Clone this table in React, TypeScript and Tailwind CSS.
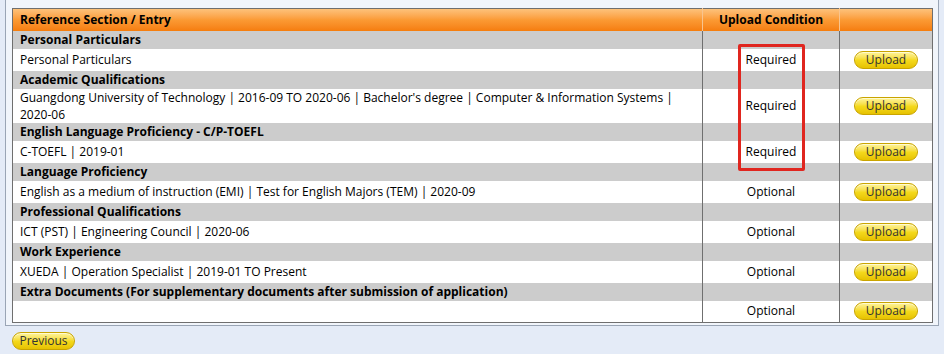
type Entry = { text: string; cond: string; tall?: boolean };
type Section = { title: string; entries: Entry[] };

const sections: Section[] = [
  { title: "Personal Particulars", entries: [{ text: "Personal Particulars", cond: "Required" }] },
  {
    title: "Academic Qualifications",
    entries: [
      {
        text: "Guangdong University of Technology | 2016-09 TO 2020-06 | Bachelor's degree | Computer & Information Systems | 2020-06",
        cond: "Required",
        tall: true,
      },
    ],
  },
  { title: "English Language Proficiency - C/P-TOEFL", entries: [{ text: "C-TOEFL | 2019-01", cond: "Required" }] },
  {
    title: "Language Proficiency",
    entries: [{ text: "English as a medium of instruction (EMI) | Test for English Majors (TEM) | 2020-09", cond: "Optional" }],
  },
  { title: "Professional Qualifications", entries: [{ text: "ICT (PST) | Engineering Council | 2020-06", cond: "Optional" }] },
  { title: "Work Experience", entries: [{ text: "XUEDA | Operation Specialist | 2019-01 TO Present", cond: "Optional" }] },
  {
    title: "Extra Documents (For supplementary documents after submission of application)",
    entries: [{ text: "", cond: "Optional" }],
  },
];

function PillButton({ label, w }: { label: string; w: string }) {
  return (
    <button
      className={`${w} h-[18px] rounded-full border border-[#c9a400] bg-gradient-to-b from-[#fff59a] via-[#f5da1c] to-[#e6c200] text-center text-[12px] leading-[16px] text-[#333] shadow-[inset_0_1px_0_#fffbd0]`}
    >
      {label}
    </button>
  );
}

export default function App() {
  return (
    <div
      className="relative h-[354px] w-[944px] overflow-hidden bg-[#e4ebf7] text-[12px] text-black"
      style={{ fontFamily: '"Open Sans", "Noto Sans", sans-serif' }}
    >
      <div className="ml-[5px] w-[934px] border border-t-0 border-[#9aa5b5] bg-[#f1f5fb] pb-[2px] pl-[6px] pr-[6px] pt-[8px]">
        <table className="w-[920px] table-fixed border-collapse border border-[#6f6f6f] bg-white">
          <colgroup>
            <col className="w-[690px]" />
            <col className="w-[137px]" />
            <col className="w-[93px]" />
          </colgroup>
          <thead>
            <tr className="h-[22px] bg-gradient-to-b from-[#fdc27a] via-[#fb9a33] to-[#f57d0c]">
              <th className="pl-[7px] text-left font-bold">Reference Section / Entry</th>
              <th className="border-l border-[#f8c48e] text-center font-bold">Upload Condition</th>
              <th className="border-l border-[#f8c48e]"></th>
            </tr>
          </thead>
          <tbody>
            {sections.map((s) => (
              <>
                <tr key={s.title} className="h-[18px] bg-[#cccccc]">
                  <td className="pl-[7px] font-bold leading-[18px]">{s.title}</td>
                  <td className="border-l border-[#6f6f6f]"></td>
                  <td className="border-l border-[#6f6f6f]"></td>
                </tr>
                {s.entries.map((e, i) => (
                  <tr key={s.title + i} className={e.tall ? "h-[34px]" : "h-[22px]"}>
                    <td className="pl-[7px] pr-[6px] leading-[17px]">{e.text}</td>
                    <td className="border-l border-[#6f6f6f] text-center">{e.cond}</td>
                    <td className="border-l border-[#6f6f6f] text-center">
                      <PillButton label="Upload" w="w-[64px]" />
                    </td>
                  </tr>
                ))}
              </>
            ))}
          </tbody>
        </table>
      </div>
      <div className="ml-[12px] mt-[6px]">
        <PillButton label="Previous" w="w-[63px]" />
      </div>
      {/* annotation box */}
      <div className="absolute left-[738px] top-[44px] h-[127px] w-[67px] rounded-[2px] border-[3px] border-[#e0261f]"></div>
    </div>
  );
}
